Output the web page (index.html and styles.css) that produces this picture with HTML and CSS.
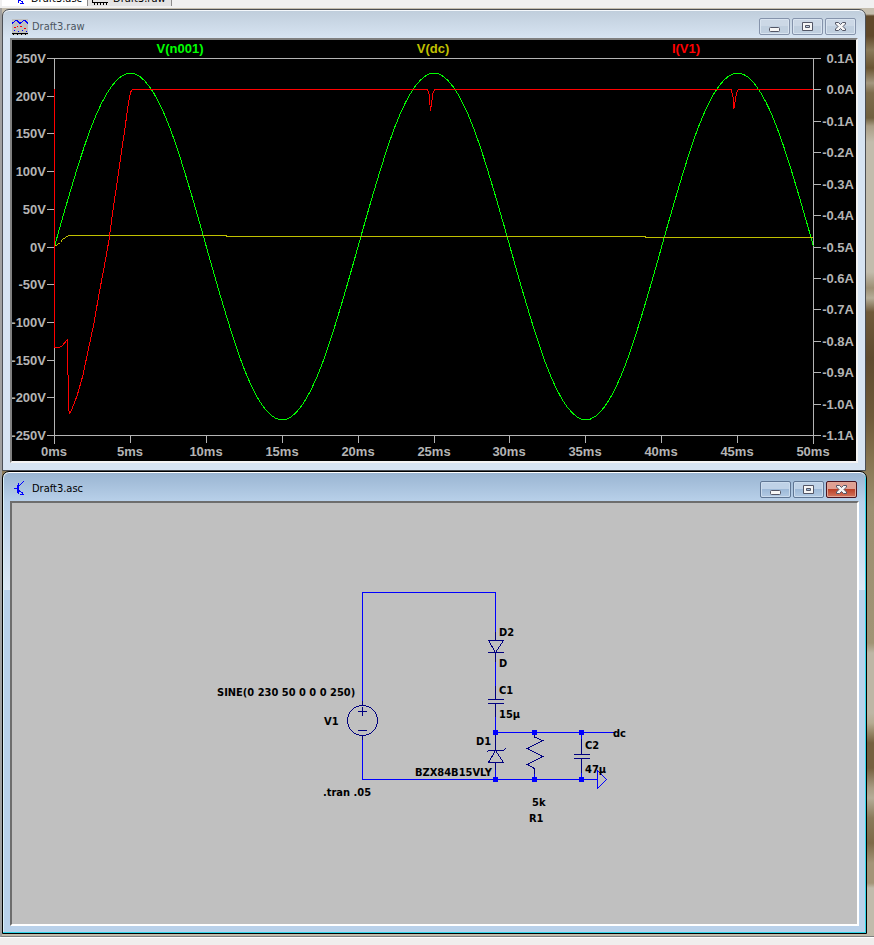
FILE: index.html
```html
<!DOCTYPE html>
<html lang="en">
<head>
<meta charset="utf-8">
<title>Draft3</title>
<link rel="stylesheet" href="styles.css">
</head>
<body>
<nav class="tabs" aria-label="Documents">
  <button class="tab tab-active" type="button">
    <svg class="icon" viewBox="0 0 16 16" aria-hidden="true"><path class="ink-blue" d="M1 7.500h4M10.500 0.500L5 6M5.500 2v11M5 8.500l6 5.500M7 13.500h4M9.500 11v3"/></svg>Draft3.asc</button>
  <button class="tab" type="button">
    <svg class="icon" viewBox="0 0 16 16" aria-hidden="true"><path class="ink-black" d="M0 12.500h16M2.500 12v3M5.500 12v3M8.500 12v3M11.500 12v3M14.500 12v3M.5 0v13"/></svg>Draft3.raw</button>
</nav>

<main class="workspace">
  <section class="window window-back">
    <header class="titlebar">
      <svg class="icon" viewBox="0 0 16 16" aria-hidden="true">
        <rect width="16" height="16" fill="#c0c0c0"/>
        <path class="ink-blue" d="M0 4.500L3.500 1.500H5L8 4.500L11.500 1.500H13L16 4.500"/>
        <path class="ink-red" d="M2 8.500h2M5 7.500h1M8 7.500h2M12 9.500h2"/>
        <path class="ink-blue" d="M2 11.500h1M6 12.500h1M10 11.500h1M14 12.500h1"/>
        <path class="ink-black" d="M0 14.500h16M1.500 14v2M5.500 14v2M9.500 14v2M13.500 14v2"/>
      </svg>
      <h2 class="title">Draft3.raw</h2>
      <div class="controls">
        <button class="control" type="button" aria-label="Minimize"><svg viewBox="0 0 29 15"><rect class="glyph" x="9.500" y="8.500" width="10" height="4" rx="1"/></svg></button>
        <button class="control" type="button" aria-label="Maximize"><svg viewBox="0 0 29 15"><path class="glyph" fill-rule="evenodd" d="M9.500 3.500h10v8h-10zM12.500 6.500h4v2h-4z"/></svg></button>
        <button class="control" type="button" aria-label="Close"><svg viewBox="0 0 29 15"><path class="glyph" d="M9.500 3.500h3l2 2 2-2h3v1.500l-2.500 2.500 2.500 2.500v1.500h-3l-2-2-2 2h-3v-1.500l2.500-2.500-2.500-2.500z"/></svg></button>
      </div>
    </header>
    <div class="client client-plot">
      <svg class="drawing" viewBox="12 40 844 421" role="img" aria-label="Waveforms">
        <path class="axis" d="M54.500 58v386M813.500 58v386M47 58.500h774M47 435.500h774
          M47 96.500h7M47 133.500h7M47 171.500h7M47 209.500h7M47 247.500h7M47 284.500h7M47 322.500h7M47 360.500h7M47 397.500h7
          M813 89.500h8M813 121.500h8M813 152.500h8M813 184.500h8M813 215.500h8M813 247.500h8M813 278.500h8M813 309.500h8M813 341.500h8M813 372.500h8M813 404.500h8
          M130.500 436v7M206.500 436v7M282.500 436v7M358.500 436v7M434.500 436v7M509.500 436v7M585.500 436v7M661.500 436v7M737.500 436v7"/>
        <path class="trace trace-green" d="M54.500 246.500
          c24.750 -88.800 48.430 -173.400 75.900 -173.400c27.470 0 51.150 84.600 75.900 173.400
          c24.750 88.800 48.430 173.400 75.900 173.400c27.470 0 51.150 -84.600 75.900 -173.400
          c24.750 -88.800 48.430 -173.400 75.900 -173.400c27.470 0 51.150 84.600 75.900 173.400
          c24.750 88.800 48.430 173.400 75.900 173.400c27.470 0 51.150 -84.600 75.900 -173.400
          c24.750 -88.800 48.430 -173.400 75.900 -173.400c27.470 0 51.150 84.600 75.900 173.400"/>
        <path class="trace trace-yellow" d="M54.500 246.500L60.500 242.500L62.500 239.500L68.500 235.500H226.500V236.500H645.500V237.500H813"/>
        <path class="trace trace-red" d="M54.500 89V347.500H58.500L61.500 346.500L67.500 339.500L68.500 408.500L69.500 413.500L72 409L77 396L83 375L88 351L94 323L99 294L104 268L109 240L113 210L117 183L121 155L125 128L128 106L130.500 92L132.500 89.500H427.500L429 94L430.500 111L433 93L434.500 89.500H731L733 97L734 108.500L736.500 93L738.500 89.500H813"/>
        <g class="plot-text">
          <g class="plot-legend">
            <text class="fill-green" x="180" y="53">V(n001)</text>
            <text class="fill-yellow" x="433" y="53">V(dc)</text>
            <text class="fill-red" x="686" y="53">I(V1)</text>
          </g>
          <g class="plot-left">
            <text x="46" y="63">250V</text><text x="46" y="101">200V</text><text x="46" y="138">150V</text><text x="46" y="176">100V</text><text x="46" y="214">50V</text><text x="46" y="252">0V</text><text x="46" y="289">-50V</text><text x="46" y="327">-100V</text><text x="46" y="365">-150V</text><text x="46" y="402">-200V</text><text x="46" y="440">-250V</text>
          </g>
          <g class="plot-right">
            <text x="854" y="63">0.1A</text><text x="854" y="94">0.0A</text><text x="854" y="126">-0.1A</text><text x="854" y="157">-0.2A</text><text x="854" y="189">-0.3A</text><text x="854" y="220">-0.4A</text><text x="854" y="252">-0.5A</text><text x="854" y="283">-0.6A</text><text x="854" y="314">-0.7A</text><text x="854" y="346">-0.8A</text><text x="854" y="377">-0.9A</text><text x="854" y="409">-1.0A</text><text x="854" y="440">-1.1A</text>
          </g>
          <g class="plot-bottom">
            <text x="54" y="456">0ms</text><text x="130" y="456">5ms</text><text x="206" y="456">10ms</text><text x="282" y="456">15ms</text><text x="358" y="456">20ms</text><text x="434" y="456">25ms</text><text x="509" y="456">30ms</text><text x="585" y="456">35ms</text><text x="661" y="456">40ms</text><text x="737" y="456">45ms</text><text x="813" y="456">50ms</text>
          </g>
        </g>
      </svg>
    </div>
  </section>

  <section class="window window-front">
    <header class="titlebar">
      <svg class="icon" viewBox="0 0 16 16" aria-hidden="true"><path class="ink-blue" d="M2 7.500h4M11.500 0.500L6 6M6.500 2v11M5.500 4v8M6 8.500l6 5.500M8 13.500h4M10.500 11v3"/></svg>
      <h2 class="title">Draft3.asc</h2>
      <div class="controls">
        <button class="control" type="button" aria-label="Minimize"><svg viewBox="0 0 29 15"><rect class="glyph" x="9.500" y="8.500" width="10" height="4" rx="1"/></svg></button>
        <button class="control" type="button" aria-label="Maximize"><svg viewBox="0 0 29 15"><path class="glyph" fill-rule="evenodd" d="M9.500 3.500h10v8h-10zM12.500 6.500h4v2h-4z"/></svg></button>
        <button class="control control-close" type="button" aria-label="Close"><svg viewBox="0 0 29 15"><path class="glyph" d="M9.500 3.500h3l2 2 2-2h3v1.500l-2.500 2.500 2.500 2.500v1.500h-3l-2-2-2 2h-3v-1.500l2.500-2.500-2.500-2.500z"/></svg></button>
      </div>
    </header>
    <div class="client client-schematic">
      <svg class="drawing" viewBox="12 503 845 421" role="img" aria-label="Schematic">
        <path class="wire" d="M362.500 702V592.500H495.500V633M495.500 661V686M495.500 716V732.500H614M495.500 769V779.500M362.500 739V779.500H597.500M534.500 732V735M534.500 773V779M581.500 732V740M581.500 772V779M597.500 770.500V788.500L606.500 779.500L597.500 770.500"/>
        <path class="part" d="M362.500 701V705.500M362.500 735.500V740M362.500 707V716M358 711.500h9M358 730.500h9
          M495.500 632V640.500M488 640.500h16M488.500 640.500L495.500 652.500L503.500 640.500M488 652.500h16M495.500 652V662
          M495.500 686V699.500M488 699.500h16M488 703.500h16M495.500 703V717
          M495.500 732V750.500M486.500 752.500L488.500 750.500H503.500L505.500 748.500M488.500 762.500L495.500 750.500L503.500 762.500ZM495.500 762V770
          M534.500 735V737L542.500 740.500L527.500 748.500L542.500 756.500L527.500 764.500L534.500 768.500V774
          M581.500 739V754.500M574 754.500h16M574 758.500h16M581.500 758V773"/>
        <circle class="part" cx="362.500" cy="720.500" r="15"/>
        <path class="node" d="M493 730h5v5h-5zM532 730h5v5h-5zM579 730h5v5h-5zM493 777h5v5h-5zM532 777h5v5h-5zM579 777h5v5h-5z"/>
        <g class="label">
          <text x="499" y="636">D2</text>
          <text x="499" y="667">D</text>
          <text x="499" y="694">C1</text>
          <text x="499" y="718">15µ</text>
          <text x="217" y="696">SINE(0 230 50 0 0 0 250)</text>
          <text x="324" y="725">V1</text>
          <text x="323" y="796">.tran .05</text>
          <text x="476" y="745">D1</text>
          <text x="415" y="776">BZX84B15VLY</text>
          <text x="613" y="737">dc</text>
          <text x="585" y="749">C2</text>
          <text x="585" y="773">47µ</text>
          <text x="532" y="806">5k</text>
          <text x="529" y="822">R1</text>
        </g>
      </svg>
    </div>
  </section>
</main>
<footer class="statusbar"></footer>
</body>
</html>
```

FILE: styles.css
```css
* { box-sizing: border-box; }

body {
  margin: 0;
  min-height: 100vh;
  display: flex;
  flex-direction: column;
  background: #f0f0f0;
  font-family: "DejaVu Sans Condensed", "DejaVu Sans", sans-serif;
  font-size: 11px;
  color: #000;
}

.icon { width: 16px; height: 16px; flex: none; }
.ink-blue, .ink-red, .ink-black { fill: none; stroke: #00f; shape-rendering: crispEdges; }
.ink-red { stroke: #f00; }
.ink-black { stroke: #000; }

/* Document tabs: only their lower edge shows */
.tabs {
  height: 8px;
  display: flex;
  align-items: flex-end;
  overflow: hidden;
  padding: 0 0 2px 2px;
}

.tab {
  flex: none;
  height: 17px;
  display: flex;
  align-items: flex-end;
  gap: 2px;
  padding: 0 5px 0 11px;
  border: 0;
  border-right: 1px solid #8c8c8c;
  background: #fff;
  font: inherit;
  line-height: 14px;
}

.tab + .tab {
  gap: 5px;
  padding-left: 4px;
  background: #e4e4e4;
}

.workspace {
  flex: 1;
  padding: 0 7px 2px 0;
  border-left: 2px solid #a0a0a0;
  border-bottom: 1px solid #808080;
  background: linear-gradient(#c5beae 0 6px, #60482a 8px 28px, #8a7a5a 42px, #6a5432 60px, #a3977f 75px, #7d6c4c 85px, #70603f 110px, #a99d85 118px, #c2bcac 134px 264px, #9c8f74 280px, #b5ad98 290px, #6f5a3a 304px, #5f4b2f 350px, #6f5a3a 410px, #85734f 450px, #9c8f70 500px, #a09475 635px, #bdb6a5 645px 705px, #b5ab92 715px, #958565 725px, #75603f 735px 760px, #a89c84 780px, #b5ad98 790px, #8a7a5a 810px, #7d6947 835px, #a39477 855px, #a39477 875px, #c0bbab 880px);
}

.window {
  border: 1px solid #4b4f55;
  border-radius: 7px 7px 0 0;
  padding: 0 7px 7px;
}

.window-back {
  margin: 1px 1px 0 0;
  background: linear-gradient(#bfcddb, #d7e4f2 28px);
  box-shadow: inset 0 1px #f4f8fc;
}

.window-front {
  border-color: #000;
  background: linear-gradient(#99b4d1, #b9d1ea 30px, #dce8f5 118px, #b9d1ea 118px);
  box-shadow: inset 0 1px #fff, inset -1px -1px #2fd6e8, inset 1px 0 #d8f0f8;
}

.titlebar {
  height: 28px;
  display: flex;
  align-items: center;
  gap: 4px;
  padding: 5px 2px 0;
}

.window-front .titlebar { height: 29px; }

.title {
  flex: 1;
  margin: 0;
  font-size: 11px;
  font-weight: 400;
  line-height: 16px;
}

.window-back .title { color: #4c5560; }

.controls { display: flex; gap: 2px; }

.control {
  width: 31px;
  height: 17px;
  display: flex;
  padding: 0;
  border: 1px solid #8593ab;
  border-radius: 2px;
  background: linear-gradient(#ccd8e6 50%, #c0cfdf 50%);
  box-shadow: inset 0 0 0 1px #d9e4f0;
}

.control svg { width: 29px; height: 15px; }

.window-front .control {
  border-color: #5f7694;
  background: linear-gradient(#bfd2e7 50%, #9db9d8 50%, #b4cbe4);
  box-shadow: inset 0 0 0 1px #cbdcee;
}

.window-front .control-close {
  border-color: #4a1420;
  background: linear-gradient(#e0a092 50%, #bb4128 50%, #d2755e);
  box-shadow: inset 0 0 0 1px #e0a898;
}

.glyph { fill: #f6f6f6; stroke: #535666; }

.client {
  border: 2px solid;
  border-color: #808080 #f4f4f4 #f4f4f4 #808080;
}

.client-plot { background: #000; }
.client-schematic { background: #c0c0c0; border-color: #6d6d6d #fff #fff #6d6d6d; }
.drawing { display: block; width: 100%; }

.axis, .trace, .wire, .part { fill: none; shape-rendering: crispEdges; }
.axis { stroke: #b4b4b4; }
.trace-green { stroke: #0f0; }
.trace-yellow { stroke: #c0c000; }
.trace-red { stroke: #f00; }

.plot-text { font: bold 13px "Liberation Sans", Arial, sans-serif; fill: #b4b4b4; }
.plot-legend, .plot-bottom { text-anchor: middle; }
.plot-left, .plot-right { text-anchor: end; }
.fill-green { fill: #0f0; }
.fill-yellow { fill: #c0c000; }
.fill-red { fill: #f00; }

.wire { stroke: #00f; }
.part { stroke: #000080; }
.node { fill: #00f; }
.label { font: bold 11px "DejaVu Sans Condensed", "DejaVu Sans", sans-serif; fill: #000; }

.statusbar {
  height: 8px;
  border-top: 1px solid #fff;
  background: #f0eeed;
}
```
